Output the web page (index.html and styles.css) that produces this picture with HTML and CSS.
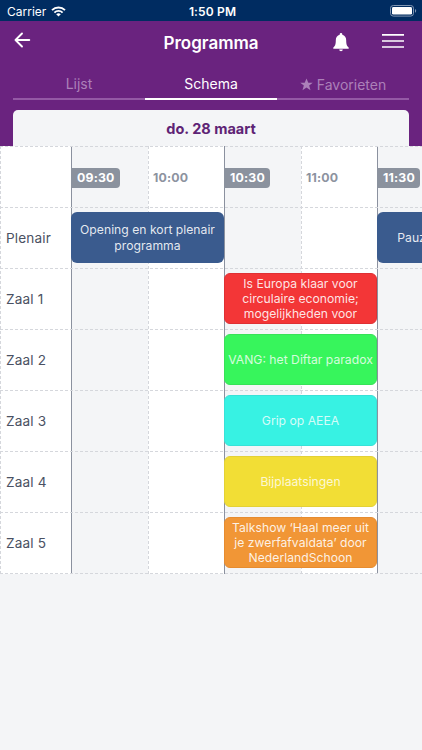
FILE: index.html
```html
<!DOCTYPE html>
<html lang="nl">
<head>
  <meta charset="UTF-8">
  <title>Programma</title>
  <link rel="stylesheet" href="styles.css">
</head>
<body>

<div class="statusbar">
  <div class="carrier">
    <span>Carrier</span>
    <svg width="15" height="11" viewBox="0 0 15 11" fill="none" stroke="#fff" stroke-width="1.9">
      <path d="M1 4.1a9.3 9.3 0 0 1 13 0"/>
      <path d="M3.4 6.6a5.8 5.8 0 0 1 8.2 0"/>
      <path d="M7.5 10.6 5.2 8.3a3.3 3.3 0 0 1 4.6 0z" fill="#fff" stroke="none"/>
    </svg>
  </div>
  <div class="clock">1:50 PM</div>
  <svg class="battery" width="27" height="12" viewBox="0 0 27 12">
    <rect x=".5" y=".5" width="23" height="10.6" rx="2.8" fill="none" stroke="#8096b3"/>
    <rect x="2" y="2" width="20" height="7.6" rx="1.4" fill="#fff"/>
    <path d="M25 4c1.600.5 1.600 3.200 0 3.700z" fill="#8096b3"/>
  </svg>
</div>

<header class="header">
  <div class="navbar">
    <svg class="back" width="17" height="16" viewBox="0 0 17 16" fill="none" stroke="#fff" stroke-width="1.9" stroke-linecap="round" stroke-linejoin="round">
      <path d="M8 1.500 1.500 8 8 14.500M1.500 8H15.300"/>
    </svg>
    <h1>Programma</h1>
    <div class="actions">
      <svg width="16" height="19" viewBox="0 0 16 19" fill="#fff">
        <path d="M8 0c.8 0 1.300.6 1.300 1.300v.5c2.500.6 3.900 2.800 3.900 5.400 0 4.500.7 5.600 2.500 7.300v1.300H.3v-1.300c1.800-1.700 2.500-2.800 2.500-7.300 0-2.600 1.400-4.800 3.900-5.400v-.5C6.700.6 7.200 0 8 0z"/>
        <path d="M6.200 16.500h3.600a1.800 1.800 0 0 1-3.600 0z"/>
      </svg>
      <svg width="22" height="14" viewBox="0 0 22 14" stroke="#fff" stroke-width="1.600">
        <path d="M0 .9h22M0 7h22M0 13h22"/>
      </svg>
    </div>
  </div>

  <nav class="tabs">
    <a class="tab">Lijst</a>
    <a class="tab active">Schema</a>
    <a class="tab favorites">
      <svg width="13" height="13" viewBox="0 0 24 24" fill="currentColor">
        <path d="M12 .8l3.300 8h8.200l-6.600 5.200 2.500 8.600L12 17.600l-7.400 5 2.500-8.600L.5 8.800h8.200z"/>
      </svg>
      <span>Favorieten</span>
    </a>
  </nav>

  <div class="day">do. 28 maart</div>
</header>

<main class="schedule">
  <!-- columns -->
  <div class="col labels"></div>
  <div class="col c0930 hour shaded"></div>
  <div class="col c1000"></div>
  <div class="col c1030 hour shaded"></div>
  <div class="col c1100"></div>
  <div class="col c1130 hour shaded"></div>

  <!-- row lines -->
  <div class="line r0"></div>
  <div class="line r1"></div>
  <div class="line r2"></div>
  <div class="line r3"></div>
  <div class="line r4"></div>
  <div class="line r5"></div>
  <div class="line r6"></div>
  <div class="line end"></div>

  <div class="time c0930 badge">09:30</div>
  <div class="time c1000">10:00</div>
  <div class="time c1030 badge">10:30</div>
  <div class="time c1100">11:00</div>
  <div class="time c1130 badge">11:30</div>

  <div class="room r1">Plenair</div>
  <div class="room r2">Zaal 1</div>
  <div class="room r3">Zaal 2</div>
  <div class="room r4">Zaal 3</div>
  <div class="room r5">Zaal 4</div>
  <div class="room r6">Zaal 5</div>

  <div class="event c0930 r1 blue">Opening en kort plenair<br>programma</div>
  <div class="event c1130 r1 blue break">Pauze</div>
  <div class="event c1030 r2 red">Is Europa klaar voor<br>circulaire economie;<br>mogelijkheden voor</div>
  <div class="event c1030 r3 green">VANG: het Diftar paradox</div>
  <div class="event c1030 r4 cyan">Grip op AEEA</div>
  <div class="event c1030 r5 yellow">Bijplaatsingen</div>
  <div class="event c1030 r6 orange">Talkshow ‘Haal meer uit<br>je zwerfafvaldata’ door<br>NederlandSchoon</div>
</main>

</body>
</html>
```

FILE: styles.css
```css
* {
  box-sizing: border-box;
}

body {
  margin: 0;
  height: 750px;
  overflow: hidden;
  background: #f4f5f7;
  font-family: Inter, "Liberation Sans", sans-serif;
}

svg {
  display: block;
}

.statusbar {
  display: grid;
  grid-template-columns: 1fr auto 1fr;
  align-items: center;
  height: 21px;
  padding: 1px 5px 0 7px;
  background: #002c61;
  color: #fff;
  font-size: 12px;
}

.carrier {
  display: flex;
  align-items: center;
  gap: 5px;
}

.clock {
  padding-left: 1px;
  font-weight: 600;
  letter-spacing: 0.15px;
}

.battery {
  justify-self: end;
}

.header {
  height: 125px;
  padding: 0 13px;
  background: #6a237f;
  color: #fff;
}

.navbar {
  display: grid;
  grid-template-columns: 1fr auto 1fr;
  align-items: center;
  height: 43px;
}

.back {
  margin: -5px 0 0 1px;
}

h1 {
  margin: 0;
  font-size: 17px;
  font-weight: 600;
}

.actions {
  display: flex;
  justify-content: flex-end;
  gap: 33px;
  padding-right: 5px;
}

.actions svg + svg {
  margin-top: 1px;
}

.tabs {
  display: grid;
  grid-template-columns: repeat(3, 1fr);
  height: 36px;
}

.tab {
  display: flex;
  align-items: center;
  justify-content: center;
  padding-top: 5px;
  border-bottom: 2px solid #9459a5;
  color: #ac80b9;
  font-size: 14px;
}

.tab.active {
  border-color: #fff;
  color: #fff;
}

.favorites {
  gap: 4px;
  padding-top: 7px;
}

.day {
  height: 36px;
  margin-top: 10px;
  border-radius: 5px 5px 0 0;
  background: #f4f5f7;
  color: #5e2375;
  font-size: 14.5px;
  font-weight: 700;
  line-height: 37px;
  text-align: center;
}

.schedule {
  display: grid;
  grid-template-columns: 71px 77px 76px 77px 76px 153px;
  grid-template-rows: repeat(7, 61px) 1px;
  width: 422px;
  overflow: hidden;
}

.col {
  grid-row: 1 / -1;
  background: repeating-linear-gradient(to bottom, #d5d7dc 0 3px, transparent 3px 5px) left / 1px 100% no-repeat #fff;
}

.col.labels {
  grid-column: 1;
}

.col.shaded {
  background: #f4f5f7;
}

.col.hour {
  border-left: 1px solid #8b919f;
}

.line {
  grid-column: 1 / -1;
  height: 1px;
  background: repeating-linear-gradient(to right, #d5d7dc 0 3px, transparent 3px 5px);
}

.c0930 { grid-column: 2; }
.c1000 { grid-column: 3; }
.c1030 { grid-column: 4; }
.c1100 { grid-column: 5; }
.c1130 { grid-column: 6; }

.r0 { grid-row: 1; }
.r1 { grid-row: 2; }
.r2 { grid-row: 3; }
.r3 { grid-row: 4; }
.r4 { grid-row: 5; }
.r5 { grid-row: 6; }
.r6 { grid-row: 7; }
.end { grid-row: 8; }

.time {
  grid-row: 1;
  align-self: center;
  justify-self: start;
  height: 20px;
  padding: 0 5px;
  margin-top: 2px;
  color: #8d939f;
  font-size: 12.3px;
  font-weight: 700;
  line-height: 20px;
  letter-spacing: 0.2px;
}

.time.badge {
  padding-left: 6px;
  border-radius: 0 4px 4px 0;
  background: #8b929e;
  color: #fff;
}

.room {
  grid-column: 1;
  align-self: center;
  padding: 1px 0 0 6px;
  color: #4a5162;
  font-size: 13.6px;
  letter-spacing: 0.15px;
}

.event {
  grid-column-end: span 2;
  display: flex;
  align-items: center;
  justify-content: center;
  margin: 5px 0;
  border-radius: 6px;
  color: rgba(255, 255, 255, 0.88);
  font-size: 12.2px;
  line-height: 15.3px;
  text-align: center;
  white-space: nowrap;
}

.break {
  grid-column: 6;
  margin-right: 77px;
}

.blue { background: #3a5b8e; }
.red { background: #f33637; border: 1px solid #df3034; }
.green { background: #37f55c; border: 1px solid #37e258; }
.cyan { background: #37f2e3; border: 1px solid #38e2d8; }
.yellow { background: #f2de35; border: 1px solid #e3d136; }
.orange { background: #f19636; border: 1px solid #e68c30; }

.green,
.cyan,
.yellow {
  color: rgba(255, 255, 255, 0.8);
}
```
